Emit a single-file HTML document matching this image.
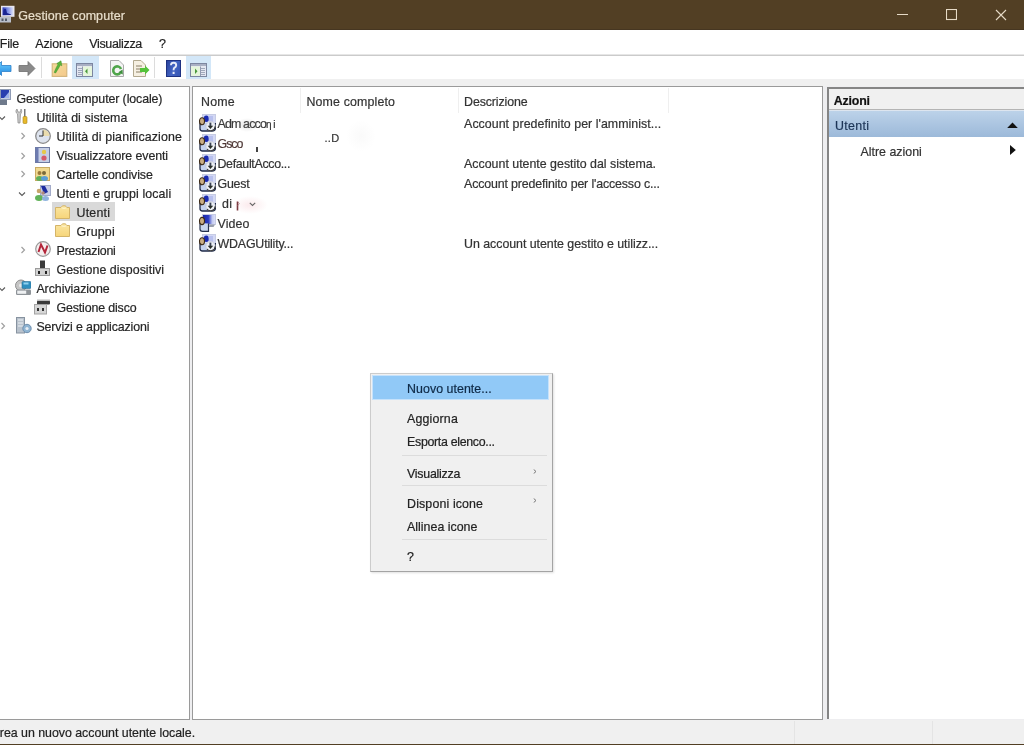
<!DOCTYPE html>
<html><head><meta charset="utf-8">
<style>
*{margin:0;padding:0}
html,body{width:1024px;height:745px;overflow:hidden;background:#f0f0f0;position:relative}
.t{position:absolute;white-space:nowrap;font-family:"Liberation Sans", sans-serif;line-height:1;-webkit-text-stroke:0.2px currentColor}
.r{position:absolute;display:block}
</style></head><body><div style="position:absolute;left:0;top:0;width:1024px;height:745px;overflow:hidden;filter:blur(0.35px)">
<svg width="0" height="0" style="position:absolute"><defs><linearGradient id="scr" x1="0" y1="0" x2="1" y2="0"><stop offset="0" stop-color="#1a26a8"/><stop offset="0.45" stop-color="#2a3ac2"/><stop offset="0.75" stop-color="#c3caf2"/><stop offset="1" stop-color="#e0e3f8"/></linearGradient></defs></svg>
<div class="r" style="left:0px;top:0px;width:1024px;height:30px;background:#523f24;"></div>
<div class="r" style="left:0px;top:29px;width:1024px;height:1px;background:#463621;"></div>
<svg class="r" style="left:0px;top:5px" width="15" height="18" viewBox="0 0 15 18"><defs><linearGradient id="tsc" x1="0" y1="0" x2="1" y2="0"><stop offset="0" stop-color="#2a36b8"/><stop offset="0.5" stop-color="#7f8fe6"/><stop offset="1" stop-color="#d9ddf6"/></linearGradient></defs><rect x="1" y="0.8" width="13.5" height="11" fill="#e8e6ee"/><rect x="2.5" y="2.3" width="10.5" height="8" fill="url(#tsc)"/><path d="M3 10 L3.5 5 Q4.5 3 6 4 L7 8 L11 9.5 L11 10Z" fill="#1a2490"/><rect x="0" y="12" width="11" height="5.5" fill="#b9bfca"/><rect x="1.5" y="13.5" width="2" height="2.5" fill="#555c6a"/><rect x="5" y="13.5" width="2" height="2.5" fill="#555c6a"/></svg>
<div class="t" style="left:18.3px;top:9.7px;font-size:12.5px;letter-spacing:0.059px;color:#e9dfcc;">Gestione computer</div>
<div class="r" style="left:897px;top:14px;width:11px;height:1px;background:#e6dac6;"></div>
<svg class="r" style="left:946px;top:9px" width="11" height="12" viewBox="0 0 11 12"><rect x="0.5" y="0.5" width="10" height="10" fill="none" stroke="#e6dac6" stroke-width="1.1"/></svg>
<svg class="r" style="left:995px;top:9px" width="12" height="12" viewBox="0 0 12 12"><path d="M1 1 L11 11 M11 1 L1 11" stroke="#e6dac6" stroke-width="1.1"/></svg>
<div class="r" style="left:0px;top:30px;width:1024px;height:25px;background:#ffffff;"></div>
<div class="r" style="left:0px;top:54px;width:1024px;height:1px;background:#e6e6e6;"></div>
<div class="r" style="left:0px;top:55px;width:1024px;height:1px;background:#cbcbcb;"></div>
<div class="t" style="left:-0.2px;top:37.8px;font-size:12.5px;letter-spacing:-0.210px;color:#1f1f1f;">File</div>
<div class="t" style="left:35.2px;top:37.8px;font-size:12.5px;letter-spacing:-0.103px;color:#1f1f1f;">Azione</div>
<div class="t" style="left:89.2px;top:37.8px;font-size:12.5px;letter-spacing:-0.325px;color:#1f1f1f;">Visualizza</div>
<div class="t" style="left:159.0px;top:37.8px;font-size:12.5px;letter-spacing:-0.952px;color:#1f1f1f;">?</div>
<div class="r" style="left:0px;top:56px;width:1024px;height:23px;background:#ffffff;"></div>
<div class="r" style="left:0px;top:79px;width:1024px;height:7px;background:#f0f0f0;"></div>
<div class="r" style="left:0px;top:86px;width:1024px;height:634px;background:#eeeef0;"></div>
<div class="r" style="left:41px;top:57px;width:1px;height:21px;background:#dcdcdc;"></div>
<div class="r" style="left:154px;top:57px;width:1px;height:21px;background:#dcdcdc;"></div>
<div class="r" style="left:72px;top:56px;width:27px;height:23px;background:#d3e7f8;"></div>
<div class="r" style="left:186px;top:56px;width:25px;height:23px;background:#d3e7f8;"></div>
<svg class="r" style="left:-6px;top:60px" width="18" height="17" viewBox="0 0 18 17"><defs><linearGradient id="gb" x1="0" y1="0" x2="0" y2="1"><stop offset="0" stop-color="#6fd0ff"/><stop offset="1" stop-color="#1f86e0"/></linearGradient></defs><path d="M0.5 8.5 L7.5 1.5 L7.5 5.5 L17 5.5 L17 11.5 L7.5 11.5 L7.5 15.5 Z" fill="url(#gb)" stroke="#2c7fc9" stroke-width="0.8"/></svg>
<svg class="r" style="left:18px;top:60px" width="18" height="17" viewBox="0 0 18 17"><path d="M17 8.5 L10 1.5 L10 5.5 L1 5.5 L1 11.5 L10 11.5 L10 15.5 Z" fill="#8a8a8a" stroke="#6f6f6f" stroke-width="0.8"/></svg>
<svg class="r" style="left:51px;top:59px" width="17" height="19" viewBox="0 0 17 19"><defs><linearGradient id="gf" x1="0" y1="0" x2="1" y2="1"><stop offset="0" stop-color="#f3dc9a"/><stop offset="1" stop-color="#f5c98c"/></linearGradient></defs><rect x="1.2" y="4.8" width="14.6" height="12.6" fill="url(#gf)" stroke="#d2b47a" stroke-width="1.1"/><path d="M3.2 13.5 C4.5 10 6 7 7 5.5 L5.8 4.5 L10 1.8 L10.8 6.8 L9.3 6 C8.3 8 6.5 11 4.6 14Z" fill="#5bb53a" stroke="#3f8f28" stroke-width="0.5"/></svg>
<svg class="r" style="left:76px;top:63px" width="17" height="14" viewBox="0 0 17 14"><rect x="0.5" y="0.5" width="16" height="13" fill="#e4e7f2" stroke="#7c86a0"/><rect x="1" y="1" width="15" height="2" fill="#a9b0c4"/><rect x="7" y="3.5" width="9" height="9.5" fill="#e6f6dc"/><path d="M11.5 5.5 L9 8.2 L11.5 11Z" fill="#4a9a3a"/><path d="M2 5.5h4M2 7.5h4M2 9.5h4M2 11.5h4" stroke="#8e98ab" stroke-width="0.8"/><path d="M6.5 3.5V13" stroke="#7c86a0" stroke-width="0.8"/></svg>
<svg class="r" style="left:109px;top:60px" width="16" height="17" viewBox="0 0 16 17"><path d="M1.5 0.5 H10 L14.5 5 V16.5 H1.5Z" fill="#f4f4f4" stroke="#a9a9a9"/><path d="M11.3 13 A4 4 0 1 1 12 9" fill="none" stroke="#4fa54a" stroke-width="2.6"/><path d="M9.3 12.2 L13.8 14.6 L13.6 9.6Z" fill="#3f8f3f"/></svg>
<svg class="r" style="left:132px;top:60px" width="18" height="17" viewBox="0 0 18 17"><path d="M1.5 0.5 H9 L13.5 5 V16.5 H1.5Z" fill="#f6f0e2" stroke="#b2a98f"/><path d="M4 6h6M4 9h6M4 12h6" stroke="#8a7f66"/><path d="M8 8 H13 V5.5 L17.5 10 L13 14.5 V12 H8Z" fill="#55c23a"/></svg>
<svg class="r" style="left:166px;top:60px" width="15" height="17" viewBox="0 0 15 17"><defs><linearGradient id="gh" x1="0" y1="0" x2="1" y2="0.4"><stop offset="0" stop-color="#27409a"/><stop offset="0.6" stop-color="#4566c4"/><stop offset="1" stop-color="#3a5ab8"/></linearGradient></defs><rect x="0.5" y="0.5" width="14" height="16" fill="url(#gh)" stroke="#1e3282"/><path d="M5 5.2 Q5 2.8 7.6 2.8 Q10.2 2.8 10.2 5.2 Q10.2 6.8 8.3 7.8 Q7.6 8.3 7.6 10.2" fill="none" stroke="#e8ecf8" stroke-width="1.9"/><rect x="6.6" y="11.8" width="2" height="2.2" fill="#e8ecf8"/></svg>
<svg class="r" style="left:190px;top:63px" width="17" height="14" viewBox="0 0 17 14"><rect x="0.5" y="0.5" width="16" height="13" fill="#e4e7f2" stroke="#7c86a0"/><rect x="1" y="1" width="15" height="2" fill="#a9b0c4"/><rect x="1" y="3.5" width="9" height="9.5" fill="#e6f6dc"/><path d="M5 5.5 L7.5 8.2 L5 11Z" fill="#4a9a3a"/><path d="M11 5.5h4M11 7.5h4M11 9.5h4M11 11.5h4" stroke="#8e98ab" stroke-width="0.8"/><path d="M10.5 3.5V13" stroke="#7c86a0" stroke-width="0.8"/></svg>
<div class="r" style="left:-2px;top:86px;width:192px;height:634px;background:#ffffff;border:1px solid #9a9a9a;box-sizing:border-box"></div>
<div class="r" style="left:192px;top:86px;width:631px;height:634px;background:#ffffff;border:1px solid #9a9a9a;box-sizing:border-box"></div>
<div class="r" style="left:827px;top:87px;width:200px;height:632px;background:#ffffff;border-left:2px solid #858585;border-top:2px solid #858585;box-sizing:border-box"></div>
<div class="r" style="left:52px;top:202px;width:63px;height:19px;background:#d9d9d9;"></div>
<svg class="r" style="left:-5px;top:89px" width="16" height="17" viewBox="0 0 16 17"><rect x="5.5" y="0.5" width="10" height="10" fill="#c5cde0" stroke="#8f9bb5"/><rect x="6" y="1" width="8" height="8" fill="#2a3fb0"/><path d="M9 9 L14 3 L14 9Z" fill="#9fb2ea"/><rect x="5" y="11" width="7" height="5" fill="#6f7a8c"/></svg>
<div class="t" style="left:16.4px;top:92.6px;font-size:12.4px;letter-spacing:-0.106px;color:#262626;">Gestione computer (locale)</div>
<svg class="r" style="left:-2px;top:115px" width="8" height="6" viewBox="0 0 8 6"><path d="M1 1.5 L4 4.5 L7 1.5" fill="none" stroke="#5a5a5a" stroke-width="1.1"/></svg>
<svg class="r" style="left:15px;top:108px" width="16" height="17" viewBox="0 0 16 17"><path d="M2 1 C0.5 2 0.5 5 2.5 6 L3 15 L5 15 L5.5 6 C7 5 7 2 6 1 L5.5 4 L3 4Z" fill="#c8c8c8" stroke="#8a8a8a" stroke-width="0.7"/><rect x="9.2" y="1" width="1.2" height="8" fill="#555"/><rect x="8" y="8.5" width="4" height="7" rx="1" fill="#e8b92a" stroke="#a88418" stroke-width="0.6"/></svg>
<div class="t" style="left:36.4px;top:111.6px;font-size:12.4px;letter-spacing:0.046px;color:#262626;">Utilità di sistema</div>
<svg class="r" style="left:20px;top:132px" width="6" height="8" viewBox="0 0 6 8"><path d="M1.5 1 L4.5 4 L1.5 7" fill="none" stroke="#a0a0a0" stroke-width="1.2"/></svg>
<svg class="r" style="left:35px;top:128px" width="16" height="17" viewBox="0 0 16 17"><circle cx="8" cy="8" r="7.3" fill="#dde3ee" stroke="#8a8a8a" stroke-width="1.3"/><path d="M8 8 V1.5 A6.5 6.5 0 0 1 14.5 8Z" fill="#eadcae"/><path d="M8 2.5 V8 H4" fill="none" stroke="#333" stroke-width="1"/></svg>
<div class="t" style="left:56.5px;top:130.6px;font-size:12.4px;letter-spacing:0.113px;color:#262626;">Utilità di pianificazione</div>
<svg class="r" style="left:20px;top:152px" width="6" height="8" viewBox="0 0 6 8"><path d="M1.5 1 L4.5 4 L1.5 7" fill="none" stroke="#a0a0a0" stroke-width="1.2"/></svg>
<svg class="r" style="left:35px;top:147px" width="16" height="17" viewBox="0 0 16 17"><rect x="0.5" y="0.5" width="14" height="15" fill="#c6cfe6" stroke="#6e7aa0"/><rect x="0.5" y="0.5" width="3" height="15" fill="#6d7bb0"/><circle cx="9" cy="5" r="2.2" fill="#e6c84a"/><circle cx="9" cy="11" r="2.6" fill="#d65a6a"/></svg>
<div class="t" style="left:56.5px;top:149.6px;font-size:12.4px;letter-spacing:-0.090px;color:#262626;">Visualizzatore eventi</div>
<svg class="r" style="left:20px;top:170px" width="6" height="8" viewBox="0 0 6 8"><path d="M1.5 1 L4.5 4 L1.5 7" fill="none" stroke="#a0a0a0" stroke-width="1.2"/></svg>
<svg class="r" style="left:35px;top:166px" width="16" height="17" viewBox="0 0 16 17"><rect x="0.5" y="1.5" width="14" height="13" fill="#f1d990" stroke="#c9ab62"/><circle cx="4.5" cy="7" r="2" fill="#9a7a3a"/><circle cx="9" cy="7" r="2" fill="#7a6a3a"/><ellipse cx="4.5" cy="12.5" rx="3.5" ry="2.5" fill="#5fae5a"/><ellipse cx="9.5" cy="12.5" rx="3.5" ry="2.5" fill="#5a9ed6"/></svg>
<div class="t" style="left:56.5px;top:168.6px;font-size:12.4px;letter-spacing:-0.087px;color:#262626;">Cartelle condivise</div>
<svg class="r" style="left:18px;top:191px" width="8" height="6" viewBox="0 0 8 6"><path d="M1 1.5 L4 4.5 L7 1.5" fill="none" stroke="#5a5a5a" stroke-width="1.1"/></svg>
<svg class="r" style="left:35px;top:185px" width="16" height="17" viewBox="0 0 16 17"><rect x="5.5" y="0.5" width="10" height="10" fill="#c9cfe8" stroke="#a3abc9"/><path d="M6 1 L10 1 L13 7 L9 9 Z" fill="#1e2ea0"/><circle cx="4" cy="6" r="2.3" fill="#c7a56a"/><ellipse cx="4" cy="13" rx="4" ry="3" fill="#62b25a"/><ellipse cx="10.5" cy="13.5" rx="3.5" ry="2.5" fill="#8fb4de"/><circle cx="8" cy="8" r="1.8" fill="#b08a7a"/></svg>
<div class="t" style="left:56.5px;top:187.6px;font-size:12.4px;letter-spacing:0.116px;color:#262626;">Utenti e gruppi locali</div>
<svg class="r" style="left:55px;top:204px" width="16" height="17" viewBox="0 0 16 17"><defs><linearGradient id="fo" x1="0" y1="0" x2="0" y2="1"><stop offset="0" stop-color="#fbe6a2"/><stop offset="1" stop-color="#f6d57a"/></linearGradient></defs><path d="M0.5 3.5 H6 L7.5 1.8 H10.5 L11.5 3.5 H14.5 V14.5 H0.5Z" fill="url(#fo)" stroke="#d4b468"/><path d="M6.5 3.8 Q9 5 11.5 3.8" fill="none" stroke="#fff6d0" stroke-width="1"/></svg>
<div class="t" style="left:76.5px;top:206.6px;font-size:12.4px;letter-spacing:0.235px;color:#262626;">Utenti</div>
<svg class="r" style="left:55px;top:222px" width="16" height="17" viewBox="0 0 16 17"><defs><linearGradient id="fo" x1="0" y1="0" x2="0" y2="1"><stop offset="0" stop-color="#fbe6a2"/><stop offset="1" stop-color="#f6d57a"/></linearGradient></defs><path d="M0.5 3.5 H6 L7.5 1.8 H10.5 L11.5 3.5 H14.5 V14.5 H0.5Z" fill="url(#fo)" stroke="#d4b468"/><path d="M6.5 3.8 Q9 5 11.5 3.8" fill="none" stroke="#fff6d0" stroke-width="1"/></svg>
<div class="t" style="left:76.5px;top:225.6px;font-size:12.4px;letter-spacing:0.197px;color:#262626;">Gruppi</div>
<svg class="r" style="left:20px;top:246px" width="6" height="8" viewBox="0 0 6 8"><path d="M1.5 1 L4.5 4 L1.5 7" fill="none" stroke="#a0a0a0" stroke-width="1.2"/></svg>
<svg class="r" style="left:35px;top:241px" width="16" height="17" viewBox="0 0 16 17"><circle cx="8" cy="8" r="7.3" fill="#f5eeee" stroke="#9a9a9a" stroke-width="1.2"/><path d="M3.5 11 L6 3.5 L10 11.5 L12.5 4.5" fill="none" stroke="#b3263a" stroke-width="2"/></svg>
<div class="t" style="left:56.5px;top:244.6px;font-size:12.4px;letter-spacing:-0.195px;color:#262626;">Prestazioni</div>
<svg class="r" style="left:35px;top:260px" width="16" height="17" viewBox="0 0 16 17"><rect x="5" y="0.5" width="5" height="8" fill="#3a3a3a"/><rect x="0.5" y="8.5" width="14" height="7" fill="#d2d2d2" stroke="#9b9b9b"/><rect x="3" y="11" width="2" height="3" fill="#222"/><rect x="10" y="11" width="2" height="3" fill="#222"/></svg>
<div class="t" style="left:56.5px;top:263.6px;font-size:12.4px;letter-spacing:0.034px;color:#262626;">Gestione dispositivi</div>
<svg class="r" style="left:-2px;top:286px" width="8" height="6" viewBox="0 0 8 6"><path d="M1 1.5 L4 4.5 L7 1.5" fill="none" stroke="#5a5a5a" stroke-width="1.1"/></svg>
<svg class="r" style="left:15px;top:279px" width="16" height="17" viewBox="0 0 16 17"><circle cx="6" cy="6.5" r="5.5" fill="#c4c4c4" stroke="#8f8f8f"/><circle cx="6" cy="6.5" r="2" fill="#e8e8e8"/><rect x="7" y="2.5" width="9" height="7" rx="1" fill="#2f8fbf" stroke="#2a6f95" stroke-width="0.6"/><rect x="8.5" y="3.5" width="5" height="2" fill="#8fd0ee"/><rect x="1" y="10.5" width="15" height="5.5" rx="1.2" fill="#8e9398"/><rect x="2.2" y="11.6" width="9" height="3.2" fill="#eef0f2"/></svg>
<div class="t" style="left:36.4px;top:282.6px;font-size:12.4px;letter-spacing:-0.034px;color:#262626;">Archiviazione</div>
<svg class="r" style="left:34px;top:299px" width="16" height="17" viewBox="0 0 16 17"><rect x="3" y="1.5" width="13" height="4" rx="1" fill="#3a3a3a"/><rect x="0.5" y="5.5" width="12" height="9.5" fill="#d6d6d6" stroke="#a3a3a3"/><rect x="3" y="9" width="2" height="3" fill="#333"/><rect x="8" y="9" width="2" height="3" fill="#333"/><rect x="3" y="0.5" width="13" height="1.5" fill="#bdbdbd"/></svg>
<div class="t" style="left:56.5px;top:301.6px;font-size:12.4px;letter-spacing:-0.144px;color:#262626;">Gestione disco</div>
<svg class="r" style="left:0px;top:322px" width="6" height="8" viewBox="0 0 6 8"><path d="M1.5 1 L4.5 4 L1.5 7" fill="none" stroke="#a0a0a0" stroke-width="1.2"/></svg>
<svg class="r" style="left:16px;top:317px" width="16" height="17" viewBox="0 0 16 17"><rect x="0.5" y="0.5" width="8" height="15.5" fill="#b9c2cc" stroke="#8793a0"/><path d="M2 3h5M2 6h5M2 9h5" stroke="#eef2f6" stroke-width="1.2"/><circle cx="11" cy="11.5" r="4.2" fill="#8fb4d2" stroke="#6f8fae"/><circle cx="11" cy="11.5" r="1.6" fill="#e8eef5"/></svg>
<div class="t" style="left:36.4px;top:320.6px;font-size:12.4px;letter-spacing:-0.122px;color:#262626;">Servizi e applicazioni</div>
<div class="r" style="left:300px;top:88px;width:1px;height:25px;background:#efefef;"></div>
<div class="r" style="left:458px;top:88px;width:1px;height:25px;background:#efefef;"></div>
<div class="r" style="left:668px;top:88px;width:1px;height:25px;background:#efefef;"></div>
<div class="t" style="left:201.0px;top:96.2px;font-size:12.4px;letter-spacing:0.231px;color:#333;">Nome</div>
<div class="t" style="left:306.5px;top:96.1px;font-size:12.4px;letter-spacing:0.136px;color:#333;">Nome completo</div>
<div class="t" style="left:464.1px;top:96.1px;font-size:12.4px;letter-spacing:-0.125px;color:#333;">Descrizione</div>
<svg class="r" style="left:199px;top:114px" width="17" height="18" viewBox="0 0 17 18"><rect x="3.5" y="0.5" width="13" height="11" fill="#d3d8f4" stroke="#c6cbe4"/><ellipse cx="7.3" cy="4.8" rx="2.6" ry="3.3" fill="#1a2ab0"/><path d="M9.5 2 L14 2 L14 8 L10 8Z" fill="#b8c0ee"/><path d="M1 9 V14.5 Q1 17 3.5 17 H13 Q16.5 17 16.5 13.5 V9" fill="#c3d1ec" stroke="#1f2a48" stroke-width="1.3"/><ellipse cx="3" cy="7.2" rx="2.5" ry="3.5" fill="#c9ae84" stroke="#3b2a18" stroke-width="1.1"/><circle cx="11.6" cy="12.2" r="4.6" fill="#eef1f6" stroke="#c9ccd6" stroke-width="0.8"/><path d="M16.2 12.2 A4.6 4.6 0 0 1 8 15" fill="none" stroke="#333" stroke-width="1.1"/><path d="M11.4 8.6 V12.5" stroke="#3a4256" stroke-width="1.9"/><path d="M8.6 11.8 H14.2 L11.4 15Z" fill="#2a2f2a"/></svg>
<div class="t" style="left:217.5px;top:118.3px;font-size:12.4px;letter-spacing:-0.829px;color:#3a3a3a;">Adm acco</div>
<div class="t" style="left:464.1px;top:118.3px;font-size:12.4px;letter-spacing:0.032px;color:#333;">Account predefinito per l'amminist...</div>
<svg class="r" style="left:199px;top:134px" width="17" height="18" viewBox="0 0 17 18"><rect x="3.5" y="0.5" width="13" height="11" fill="#d3d8f4" stroke="#c6cbe4"/><ellipse cx="7.3" cy="4.8" rx="2.6" ry="3.3" fill="#1a2ab0"/><path d="M9.5 2 L14 2 L14 8 L10 8Z" fill="#b8c0ee"/><path d="M1 9 V14.5 Q1 17 3.5 17 H13 Q16.5 17 16.5 13.5 V9" fill="#c3d1ec" stroke="#1f2a48" stroke-width="1.3"/><ellipse cx="3" cy="7.2" rx="2.5" ry="3.5" fill="#c9ae84" stroke="#3b2a18" stroke-width="1.1"/><circle cx="11.6" cy="12.2" r="4.6" fill="#eef1f6" stroke="#c9ccd6" stroke-width="0.8"/><path d="M16.2 12.2 A4.6 4.6 0 0 1 8 15" fill="none" stroke="#333" stroke-width="1.1"/><path d="M11.4 8.6 V12.5" stroke="#3a4256" stroke-width="1.9"/><path d="M8.6 11.8 H14.2 L11.4 15Z" fill="#2a2f2a"/></svg>
<div class="t" style="left:217.5px;top:138.3px;font-size:12.4px;letter-spacing:-0.985px;color:#4e3836;">Gsco</div>
<svg class="r" style="left:199px;top:154px" width="17" height="18" viewBox="0 0 17 18"><rect x="3.5" y="0.5" width="13" height="11" fill="#d3d8f4" stroke="#c6cbe4"/><ellipse cx="7.3" cy="4.8" rx="2.6" ry="3.3" fill="#1a2ab0"/><path d="M9.5 2 L14 2 L14 8 L10 8Z" fill="#b8c0ee"/><path d="M1 9 V14.5 Q1 17 3.5 17 H13 Q16.5 17 16.5 13.5 V9" fill="#c3d1ec" stroke="#1f2a48" stroke-width="1.3"/><ellipse cx="3" cy="7.2" rx="2.5" ry="3.5" fill="#c9ae84" stroke="#3b2a18" stroke-width="1.1"/><circle cx="11.6" cy="12.2" r="4.6" fill="#eef1f6" stroke="#c9ccd6" stroke-width="0.8"/><path d="M16.2 12.2 A4.6 4.6 0 0 1 8 15" fill="none" stroke="#333" stroke-width="1.1"/><path d="M11.4 8.6 V12.5" stroke="#3a4256" stroke-width="1.9"/><path d="M8.6 11.8 H14.2 L11.4 15Z" fill="#2a2f2a"/></svg>
<div class="t" style="left:217.5px;top:158.3px;font-size:12.4px;letter-spacing:-0.328px;color:#333;">DefaultAcco...</div>
<div class="t" style="left:464.1px;top:158.3px;font-size:12.4px;letter-spacing:-0.006px;color:#333;">Account utente gestito dal sistema.</div>
<svg class="r" style="left:199px;top:174px" width="17" height="18" viewBox="0 0 17 18"><rect x="3.5" y="0.5" width="13" height="11" fill="#d3d8f4" stroke="#c6cbe4"/><ellipse cx="7.3" cy="4.8" rx="2.6" ry="3.3" fill="#1a2ab0"/><path d="M9.5 2 L14 2 L14 8 L10 8Z" fill="#b8c0ee"/><path d="M1 9 V14.5 Q1 17 3.5 17 H13 Q16.5 17 16.5 13.5 V9" fill="#c3d1ec" stroke="#1f2a48" stroke-width="1.3"/><ellipse cx="3" cy="7.2" rx="2.5" ry="3.5" fill="#c9ae84" stroke="#3b2a18" stroke-width="1.1"/><circle cx="11.6" cy="12.2" r="4.6" fill="#eef1f6" stroke="#c9ccd6" stroke-width="0.8"/><path d="M16.2 12.2 A4.6 4.6 0 0 1 8 15" fill="none" stroke="#333" stroke-width="1.1"/><path d="M11.4 8.6 V12.5" stroke="#3a4256" stroke-width="1.9"/><path d="M8.6 11.8 H14.2 L11.4 15Z" fill="#2a2f2a"/></svg>
<div class="t" style="left:217.5px;top:178.3px;font-size:12.4px;letter-spacing:-0.217px;color:#333;">Guest</div>
<div class="t" style="left:464.1px;top:178.3px;font-size:12.4px;letter-spacing:-0.149px;color:#333;">Account predefinito per l'accesso c...</div>
<svg class="r" style="left:199px;top:194px" width="17" height="18" viewBox="0 0 17 18"><rect x="3.5" y="0.5" width="13" height="11" fill="#d3d8f4" stroke="#c6cbe4"/><ellipse cx="7.3" cy="4.8" rx="2.6" ry="3.3" fill="#1a2ab0"/><path d="M9.5 2 L14 2 L14 8 L10 8Z" fill="#b8c0ee"/><path d="M1 9 V14.5 Q1 17 3.5 17 H13 Q16.5 17 16.5 13.5 V9" fill="#c3d1ec" stroke="#1f2a48" stroke-width="1.3"/><ellipse cx="3" cy="7.2" rx="2.5" ry="3.5" fill="#c9ae84" stroke="#3b2a18" stroke-width="1.1"/><circle cx="11.6" cy="12.2" r="4.6" fill="#eef1f6" stroke="#c9ccd6" stroke-width="0.8"/><path d="M16.2 12.2 A4.6 4.6 0 0 1 8 15" fill="none" stroke="#333" stroke-width="1.1"/><path d="M11.4 8.6 V12.5" stroke="#3a4256" stroke-width="1.9"/><path d="M8.6 11.8 H14.2 L11.4 15Z" fill="#2a2f2a"/></svg>
<div class="t" style="left:221.9px;top:198.3px;font-size:12.4px;letter-spacing:0.525px;color:#333;">di</div>
<svg class="r" style="left:199px;top:214px" width="17" height="18" viewBox="0 0 17 18"><rect x="3.5" y="0.5" width="13" height="10" fill="url(#scr)" stroke="#c6cbe4"/><path d="M10.5 10.5 L16 10.5 L14.5 13 L10 13Z" fill="#9aa0ae"/><path d="M1 9 V15 Q1 17.3 3.5 17.3 H9.5 V9.5" fill="#c9d6ee" stroke="#26324e" stroke-width="1.2"/><ellipse cx="3" cy="7" rx="2.5" ry="3.6" fill="#c9ae84" stroke="#3b2a18" stroke-width="1.1"/></svg>
<div class="t" style="left:217.5px;top:218.3px;font-size:12.4px;letter-spacing:0.102px;color:#333;">Video</div>
<svg class="r" style="left:199px;top:234px" width="17" height="18" viewBox="0 0 17 18"><rect x="3.5" y="0.5" width="13" height="11" fill="#d3d8f4" stroke="#c6cbe4"/><ellipse cx="7.3" cy="4.8" rx="2.6" ry="3.3" fill="#1a2ab0"/><path d="M9.5 2 L14 2 L14 8 L10 8Z" fill="#b8c0ee"/><path d="M1 9 V14.5 Q1 17 3.5 17 H13 Q16.5 17 16.5 13.5 V9" fill="#c3d1ec" stroke="#1f2a48" stroke-width="1.3"/><ellipse cx="3" cy="7.2" rx="2.5" ry="3.5" fill="#c9ae84" stroke="#3b2a18" stroke-width="1.1"/><circle cx="11.6" cy="12.2" r="4.6" fill="#eef1f6" stroke="#c9ccd6" stroke-width="0.8"/><path d="M16.2 12.2 A4.6 4.6 0 0 1 8 15" fill="none" stroke="#333" stroke-width="1.1"/><path d="M11.4 8.6 V12.5" stroke="#3a4256" stroke-width="1.9"/><path d="M8.6 11.8 H14.2 L11.4 15Z" fill="#2a2f2a"/></svg>
<div class="t" style="left:217.5px;top:238.3px;font-size:12.4px;letter-spacing:-0.171px;color:#333;">WDAGUtility...</div>
<div class="t" style="left:464.1px;top:238.3px;font-size:12.4px;letter-spacing:-0.041px;color:#333;">Un account utente gestito e utilizz...</div>
<div class="r" style="left:236px;top:118px;width:22px;height:14px;background:radial-gradient(ellipse at center, rgba(120,120,120,0.22), rgba(255,255,255,0) 70%);"></div>
<div class="t" style="left:266.1px;top:119.5px;font-size:10px;letter-spacing:1.658px;color:#333;">ηi</div>
<div class="r" style="left:256px;top:147px;width:1.5px;height:5px;background:#444;"></div>
<div class="t" style="left:324.5px;top:132.5px;font-size:11px;letter-spacing:0.315px;color:#333;">..D</div>
<div class="r" style="left:346px;top:120px;width:30px;height:32px;background:radial-gradient(ellipse at center, rgba(150,150,150,0.05), rgba(255,255,255,0) 70%);"></div>
<div class="r" style="left:232px;top:196px;width:36px;height:18px;background:radial-gradient(ellipse at center, rgba(240,170,180,0.25), rgba(255,255,255,0) 70%);"></div>
<svg class="r" style="left:236px;top:201px" width="5" height="10" viewBox="0 0 5 10"><path d="M1.5 0.5 V9.5" stroke="#7a3a40" stroke-width="1.6"/><path d="M2 1 Q4.5 2 2 4.5" fill="none" stroke="#b98a90" stroke-width="1"/></svg>
<svg class="r" style="left:249px;top:202px" width="7" height="5" viewBox="0 0 7 5"><path d="M0.8 0.8 L3.5 3.5 L6.2 0.8" fill="none" stroke="#666" stroke-width="1.1"/></svg>
<div class="r" style="left:829px;top:89px;width:195px;height:20px;background:#f0f0f0;"></div>
<div class="r" style="left:829px;top:109px;width:195px;height:1px;background:#b4b4b4;"></div>
<div class="r" style="left:829px;top:110px;width:195px;height:1px;background:#dde5ef;"></div>
<div class="r" style="left:829px;top:111px;width:195px;height:26px;background:linear-gradient(#bcd2e9,#9cb9d9);"></div>
<div class="t" style="left:833.8px;top:95.0px;font-size:12.4px;letter-spacing:-0.199px;color:#111; font-weight:bold;">Azioni</div>
<div class="t" style="left:835.0px;top:120.0px;font-size:12.4px;letter-spacing:0.335px;color:#1d3557;">Utenti</div>
<svg class="r" style="left:1007px;top:122px" width="11" height="6" viewBox="0 0 11 6"><path d="M0.2 6 L5.5 0.6 L10.8 6Z" fill="#111"/></svg>
<div class="t" style="left:860.5px;top:145.5px;font-size:12.4px;letter-spacing:0.005px;color:#333;">Altre azioni</div>
<svg class="r" style="left:1010px;top:145px" width="6" height="10" viewBox="0 0 6 10"><path d="M0 0 L5.8 5 L0 10Z" fill="#111"/></svg>
<div class="r" style="left:0px;top:720px;width:1024px;height:24px;background:#f0f0f0;"></div>
<div class="r" style="left:794px;top:721px;width:1px;height:23px;background:#e4e4e4;"></div>
<div class="r" style="left:932px;top:721px;width:1px;height:23px;background:#e4e4e4;"></div>
<div class="r" style="left:0px;top:744px;width:1024px;height:1px;background:#523f24;"></div>
<div class="t" style="left:-0.2px;top:727.2px;font-size:12.4px;letter-spacing:-0.031px;color:#222;">rea un nuovo account utente locale.</div>
<div class="r" style="left:370px;top:373px;width:183px;height:199px;background:#f0f0f0;border:1px solid #cccccc;border-right-color:#a4a4a4;border-bottom-color:#a4a4a4;box-sizing:border-box;box-shadow:1px 1px 2px rgba(0,0,0,0.12)"></div>
<div class="r" style="left:373px;top:376px;width:175px;height:23px;background:#91c9f7;box-shadow:0 0 0 1px #c6e2fb"></div>
<div class="r" style="left:402px;top:455px;width:145px;height:1px;background:#dcdcdc;"></div>
<div class="r" style="left:402px;top:485px;width:145px;height:1px;background:#dcdcdc;"></div>
<div class="r" style="left:402px;top:539px;width:145px;height:1px;background:#dcdcdc;"></div>
<div class="t" style="left:407.1px;top:383.3px;font-size:12.4px;letter-spacing:0.040px;color:#0f2a47;">Nuovo utente...</div>
<div class="t" style="left:407.1px;top:412.7px;font-size:12.4px;letter-spacing:0.158px;color:#222;">Aggiorna</div>
<div class="t" style="left:407.1px;top:436.4px;font-size:12.4px;letter-spacing:-0.321px;color:#222;">Esporta elenco...</div>
<div class="t" style="left:407.1px;top:467.6px;font-size:12.4px;letter-spacing:-0.260px;color:#222;">Visualizza</div>
<div class="t" style="left:407.1px;top:497.9px;font-size:12.4px;letter-spacing:0.128px;color:#222;">Disponi icone</div>
<div class="t" style="left:407.1px;top:521.0px;font-size:12.4px;letter-spacing:-0.001px;color:#222;">Allinea icone</div>
<div class="t" style="left:407.1px;top:551.2px;font-size:12.4px;letter-spacing:-0.096px;color:#222;">?</div>
<svg class="r" style="left:533px;top:469px" width="4" height="5" viewBox="0 0 4 5"><path d="M0.7 0.5 L3 2.5 L0.7 4.5" fill="none" stroke="#777" stroke-width="1"/></svg>
<svg class="r" style="left:533px;top:498px" width="4" height="5" viewBox="0 0 4 5"><path d="M0.7 0.5 L3 2.5 L0.7 4.5" fill="none" stroke="#777" stroke-width="1"/></svg>
</div></body></html>
